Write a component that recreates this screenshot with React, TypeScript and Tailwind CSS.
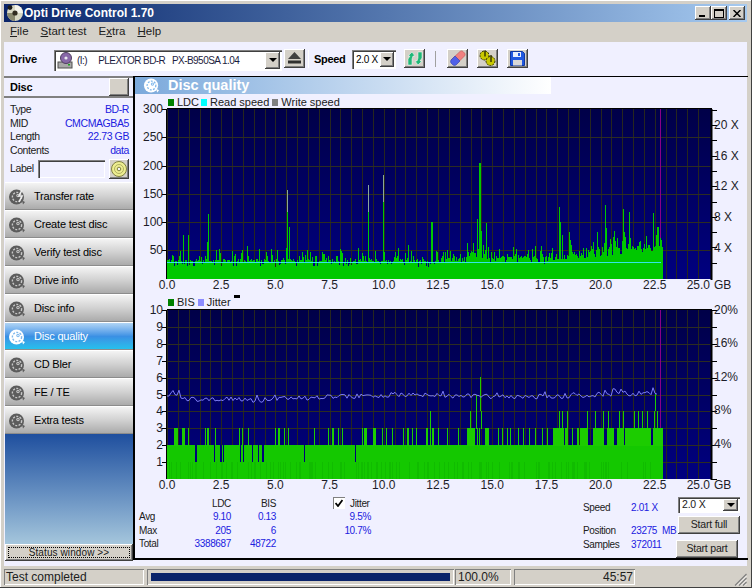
import React from "react";

function rng(seed: number) {
  let s = seed;
  return () => {
    s = (s + 0x6d2b79f5) | 0;
    let t = Math.imul(s ^ (s >>> 15), 1 | s);
    t = (t + Math.imul(t ^ (t >>> 7), 61 | t)) ^ t;
    return ((t ^ (t >>> 14)) >>> 0) / 4294967296;
  };
}

const X0 = 167;
const XS = 21.68;
const XEND = 661;
const vGrid = Array.from({ length: 50 }, (_, i) => X0 + 10.84 * i);
const xLabels = ["0.0", "2.5", "5.0", "7.5", "10.0", "12.5", "15.0", "17.5", "20.0", "22.5"];

const ldcPeaks: [number, number][] = [
  [183, 235], [188, 235], [207, 242], [208, 214], [219, 249], [247, 246], [259, 249], [286, 248], [287, 190], [289, 227],
  [307, 250], [340, 249], [358, 248], [368, 185], [383, 175], [398, 248], [408, 245], [431, 222], [432, 222], [437, 252],
  [467, 243], [473, 243], [477, 219], [479, 163], [480, 163], [481, 231], [483, 245], [486, 223], [559, 207], [560, 222],
  [562, 235], [569, 232], [570, 240], [597, 232], [605, 205], [606, 228], [614, 231], [617, 238], [623, 209], [624, 232],
  [629, 212], [630, 238], [653, 213], [657, 227], [658, 227], [660, 238],
];

function ldcPath() {
  const r = rng(11);
  let d = "";
  const peaks = new Map(ldcPeaks);
  for (let x = X0; x <= XEND + 1; x++) {
    const a = r();
    const b = r();
    let y = 262 - a * 3;
    if (b < 0.18) y = 263 + a * 4;
    else if (b > 0.66) y = 261 - a * 12;
    if (x > 440) y -= 3;
    if (x > 548) y -= ((x - 548) / 112) * 10 + a * 3;
    const p = peaks.get(x);
    if (p) y = p;
    d += `M${x + 0.5} ${y.toFixed(0)}V279`;
  }
  return d;
}

const threes = [
  [174, 176], [177, 177], [182, 184], [188, 188], [205, 205], [207, 208], [215, 215], [239, 239], [242, 242], [248, 248],
  [275, 275], [278, 279], [284, 284], [288, 288], [314, 314], [328, 328], [332, 333], [338, 338], [342, 342], [362, 362],
  [364, 366], [373, 375], [382, 382], [386, 386], [392, 392], [403, 403], [407, 408], [412, 412], [416, 416], [426, 427],
  [430, 430], [432, 433], [438, 438], [447, 447], [458, 458], [467, 474], [477, 477], [479, 479], [485, 488], [498, 498],
  [502, 502], [507, 507], [510, 510], [518, 518], [523, 523], [529, 529], [535, 535], [542, 542], [547, 547], [553, 563],
  [565, 567], [572, 572], [577, 578], [580, 587], [593, 603], [607, 613], [617, 623], [625, 632], [633, 650], [653, 662],
];
const fours = [430, 470, 476, 481, 559, 562, 567, 587, 595, 603, 608, 619, 623, 634, 638, 642, 647, 654, 657];
const gaps = [195, 196, 214, 220, 221, 223, 240, 243, 252, 258, 262, 263, 304, 355];

function bisPaths() {
  let three = "";
  for (const [a, b] of threes) for (let x = a; x <= b; x++) three += `M${x + 0.5} 446V428`;
  let four = "";
  for (const x of fours) four += `M${x + 0.5} 429V411`;
  const r = rng(5);
  let band = "";
  for (let x = X0; x <= XEND + 1; x += 1) if (r() < 0.25) band += `M${x + 0.5} 462V479`;
  let gap = "";
  for (const x of gaps) gap += `M${x + 0.5} 445V462`;
  return { three, four, band, gap };
}

function jitterPoints() {
  const r = rng(23);
  const anchors: [number, number][] = [
    [167, 398], [170, 394], [175, 393], [182, 397], [190, 399], [260, 400], [330, 397], [400, 394.5], [440, 396], [530, 397], [600, 394.5], [658, 392.5],
  ];
  const pts: string[] = [];
  let i = 0;
  for (let x = X0; x <= 658; x += 2) {
    while (i < anchors.length - 2 && x > anchors[i + 1][0]) i++;
    const [xa, ya] = anchors[i];
    const [xb, yb] = anchors[i + 1];
    const base = ya + ((yb - ya) * (x - xa)) / (xb - xa);
    const y = base + (r() - 0.5) * 5 - (r() > 0.93 ? 3 : 0);
    pts.push(`${x},${y.toFixed(1)}`);
  }
  return pts.join(" ");
}

const bis = bisPaths();

function PlotBg({ id, y0, y1, hs }: { id: string; y0: number; y1: number; hs: number[] }) {
  return (
    <>
      <defs>
        <linearGradient id={id} x1="0" y1="0" x2="0" y2="1">
          <stop offset="0" stopColor="#000048" />
          <stop offset="1" stopColor="#000080" />
        </linearGradient>
      </defs>
      <rect x={X0} y={y0} width={544} height={y1 - y0} fill={`url(#${id})`} />
      {vGrid.map((x) => (
        <line key={x} x1={Math.round(x) + 0.5} x2={Math.round(x) + 0.5} y1={y0} y2={y1} stroke="#26261f" />
      ))}
      {hs.map((y) => (
        <line key={y} x1={X0} x2={711} y1={Math.round(y) + 0.5} y2={Math.round(y) + 0.5} stroke="#2c2c22" />
      ))}
    </>
  );
}

function PlotFrame({ y0, y1, left, right, labelY }: { y0: number; y1: number; left: number[]; right: number[]; labelY: number }) {
  return (
    <>
      <line x1={X0 - 0.5} x2={X0 - 0.5} y1={y0} y2={y1} stroke="#000" />
      <line x1={X0} x2={712} y1={y0 - 0.5} y2={y0 - 0.5} stroke="#000" strokeWidth={1} />
      <line x1={711.5} x2={711.5} y1={y0} y2={y1 + 1} stroke="#000" strokeWidth={2} />
      {left.map((y) => (
        <line key={y} x1={X0 - 5} x2={X0} y1={Math.round(y) + 0.5} y2={Math.round(y) + 0.5} stroke="#000" />
      ))}
      {right.map((y) => (
        <line key={y} x1={711} x2={717} y1={Math.round(y) + 0.5} y2={Math.round(y) + 0.5} stroke="#000" />
      ))}
      {xLabels.map((t, i) => (
        <text key={t} x={X0 + i * 2.5 * XS} y={labelY} textAnchor="middle" fontSize={12} fill="#1c1c28">{t}</text>
      ))}
      <text x={710} y={labelY} textAnchor="end" fontSize={12} fill="#1c1c28">25.0</text>
      <text x={714} y={labelY} fontSize={12} fill="#1c1c28">GB</text>
    </>
  );
}

function Chart1() {
  const hs = [50, 100, 150, 200, 250].map((v) => 278.5 - v * 0.565);
  const rightTicks = Array.from({ length: 11 }, (_, i) => 125 + i * 15.3 - 15.3);
  return (
    <svg width={613} height={186} viewBox="135 108 613 186" className="block shrink-0 overflow-visible">
      <PlotBg id="g1" y0={109} y1={279} hs={hs} />
      <line x1={660.5} x2={660.5} y1={109} y2={279} stroke="#880088" />
      <path d={ldcPath()} stroke="#00c800" strokeWidth={1} fill="none" />
      <line x1={287.5} x2={287.5} y1={190} y2={212} stroke="#8aa898" />
      <line x1={368.5} x2={368.5} y1={185} y2={212} stroke="#8aa898" />
      <line x1={383.5} x2={383.5} y1={175} y2={202} stroke="#8aa898" />
      <line x1={167} x2={661} y1={262.5} y2={262.5} stroke="#30e8e8" />
      <PlotFrame y0={109} y1={279} left={[109, ...hs]} right={rightTicks} labelY={289} />
      {[300, 250, 200, 150, 100, 50].map((v) => (
        <text key={v} x={163} y={278.5 - v * 0.565 + 4} textAnchor="end" fontSize={12} fill="#1c1c28">{v}</text>
      ))}
      {[["20 X", 125], ["16 X", 156], ["12 X", 186], ["8 X", 216.5], ["4 X", 248]].map(([t, y]) => (
        <text key={t as string} x={714} y={(y as number) + 4} fontSize={12} fill="#1c1c28">{t}</text>
      ))}
    </svg>
  );
}

function Chart2() {
  const hs = [1, 2, 3, 4, 5, 6, 7, 8, 9].map((v) => 479 - v * 16.9);
  const rightTicks = Array.from({ length: 11 }, (_, i) => 310 + i * 16.9);
  return (
    <svg width={613} height={184} viewBox="135 308 613 184" className="block shrink-0 overflow-visible">
      <PlotBg id="g2" y0={310} y1={479} hs={hs} />
      <line x1={660.5} x2={660.5} y1={310} y2={429} stroke="#880088" />
      <rect x={X0} y={445} width={XEND - X0 + 2} height={34} fill="#14c800" />
      <path d={bis.band} stroke="#10bc00" fill="none" />
      <path d={bis.gap} stroke="#00007a" fill="none" />
      <path d={bis.three} stroke="#1ccc00" fill="none" />
      <path d={bis.four} stroke="#1ccc00" fill="none" />
      <line x1={480.5} x2={480.5} y1={377} y2={411} stroke="#1ccc00" />
      <line x1={476.5} x2={476.5} y1={395} y2={411} stroke="#1ccc00" />
      <line x1={655.5} x2={655.5} y1={394} y2={411} stroke="#1ccc00" />
      <polyline points={jitterPoints()} fill="none" stroke="#7c7cf4" strokeWidth={1} />
      <PlotFrame y0={310} y1={479} left={[310, ...hs]} right={rightTicks} labelY={489} />
      {[10, 9, 8, 7, 6, 5, 4, 3, 2, 1].map((v) => (
        <text key={v} x={163} y={479 - v * 16.9 + 4} textAnchor="end" fontSize={12} fill="#1c1c28">{v}</text>
      ))}
      {[["20%", 310], ["16%", 343], ["12%", 376.5], ["8%", 410], ["4%", 444]].map(([t, y]) => (
        <text key={t as string} x={714} y={(y as number) + 4} fontSize={12} fill="#1c1c28">{t}</text>
      ))}
    </svg>
  );
}

function DiscIcon({ light, size = 18, bolt }: { light?: boolean; size?: number; bolt?: boolean }) {
  const main = light ? "#ffffff" : "#5c5c5c";
  const inner = light ? "#7fb8ec" : "#c8c8c8";
  return (
    <svg width={size} height={size} viewBox="0 0 18 18" className="shrink-0">
      <circle cx="8.5" cy="9" r="7.5" fill={main} />
      <circle cx="9" cy="9" r="4.6" fill="none" stroke={inner} strokeWidth="1.4" strokeDasharray="2 1.4" />
      <circle cx="10" cy="7.5" r="1.7" fill={inner} />
      <circle cx="10" cy="7.5" r="0.7" fill={main} />
      <path d="M14 12.5l3 1.5-2 2.5z" fill={main} />
      {bolt && <path d="M14 2l-3 6h3l-3 6" fill="none" stroke="#ececec" strokeWidth="1.6" />}
    </svg>
  );
}

const raised = "shadow-[inset_-1px_-1px_0_#404040,inset_1px_1px_0_#ffffff,inset_-2px_-2px_0_#808080]";
const sunken = "shadow-[inset_1px_1px_0_#808080,inset_2px_2px_0_#404040,inset_-1px_-1px_0_#ffffff]";
const thinSunken = "shadow-[inset_1px_1px_0_#808080,inset_-1px_-1px_0_#ffffff]";

function ToolBtn({ children, className = "" }: { children: React.ReactNode; className?: string }) {
  return (
    <div className={`w-[21px] h-[19px] bg-[#d4d0c8] flex items-center justify-center shrink-0 ${raised} ${className}`}>
      {children}
    </div>
  );
}

function ComboArrow({ w = 15 }: { w?: number }) {
  return (
    <div className={`h-full bg-[#d4d0c8] flex items-center justify-center shrink-0 ${raised}`} style={{ width: w }}>
      <div className="w-0 h-0 border-l-[4px] border-r-[4px] border-t-[4px] border-l-transparent border-r-transparent border-t-black" />
    </div>
  );
}

function NavBtn({ label, active, bolt }: { label: string; active?: boolean; bolt?: boolean }) {
  return (
    <div
      className={`h-[28px] flex items-center pl-[3px] gap-[8px] text-[11px] tracking-[-0.2px] border-t border-white shadow-[inset_0_-1px_0_#8c8c8c] ${
        active
          ? "bg-gradient-to-b from-[#b0d4f4] via-[#3a90e4] to-[#22c4ec] text-white"
          : "bg-gradient-to-b from-[#f4f4f4] via-[#d0d0d0] to-[#a8a8a8] text-black"
      }`}
    >
      <DiscIcon light={active} bolt={bolt} />
      <span>{label}</span>
    </div>
  );
}

function InfoRow({ k, v }: { k: string; v: string }) {
  return (
    <div className="flex justify-between h-[13.7px] items-center">
      <span className="text-[#202020]">{k}</span>
      <span className="text-[#2020e0]">{v}</span>
    </div>
  );
}

const cell = "h-[13.5px] flex items-center";

export default function App() {
  return (
    <div className="w-[752px] h-[588px] bg-[#d4d0c8] flex flex-col pt-[4px] px-[4px] pb-[2px] overflow-hidden border-r border-b border-[#404040] shadow-[inset_1px_1px_0_#ffffff] text-[11px] text-black [font-family:'Liberation_Sans',Arial,sans-serif]">
      {/* Title */}
      <div className="h-[18px] shrink-0 bg-gradient-to-r from-[#0a246a] to-[#a6caf0] flex items-center pl-[2px] pr-[2px]">
        <svg width="18" height="18" viewBox="0 0 18 18" className="shrink-0">
          <circle cx="9" cy="9" r="8" fill="#d8d8c4" />
          <path d="M9 1a8 8 0 0 1 8 8H9z" fill="#f4f4ec" />
          <path d="M1 9a8 8 0 0 0 8 8V9z" fill="#8a8a70" />
          <circle cx="9" cy="9" r="2.6" fill="#302c20" />
          <circle cx="4" cy="3.6" r="2.4" fill="#1c1c18" />
        </svg>
        <span className="text-white font-bold text-[12px]">Opti Drive Control 1.70</span>
        <div className="ml-auto flex items-center">
          <div className={`w-[16px] h-[14px] bg-[#d4d0c8] relative ${raised}`}>
            <div className="absolute left-[4px] bottom-[3px] w-[6px] h-[2px] bg-black" />
          </div>
          <div className={`w-[16px] h-[14px] bg-[#d4d0c8] flex items-center justify-center ${raised}`}>
            <div className="w-[10px] h-[9px] border border-black border-t-2" />
          </div>
          <div className={`ml-[2px] w-[16px] h-[14px] bg-[#d4d0c8] flex items-center justify-center ${raised}`}>
            <svg width="8" height="7" viewBox="0 0 8 7"><path d="M0.5 0L7.5 7M7.5 0L0.5 7" stroke="#000" strokeWidth="1.5" /></svg>
          </div>
        </div>
      </div>
      {/* Menu */}
      <div className="h-[20px] shrink-0 flex items-center text-[11.5px] text-[#202020] pl-[6px] gap-[12px]">
        <span><u>F</u>ile</span>
        <span><u>S</u>tart test</span>
        <span>E<u>x</u>tra</span>
        <span><u>H</u>elp</span>
      </div>
      {/* Toolbar */}
      <div className="h-[34px] shrink-0 bg-[#f0f0ff] flex items-center">
        <span className="ml-[6px] w-[44px] font-bold tracking-[-0.1px]">Drive</span>
        <div className={`w-[228px] h-[21px] bg-white flex items-center pl-[3px] pr-[2px] py-[2px] mt-[2px] ${sunken}`}>
          <svg width="16" height="17" viewBox="0 0 16 17" className="shrink-0">
            <rect x="1" y="10" width="14" height="6" fill="#a8a8a8" stroke="#505050" />
            <circle cx="9" cy="6" r="5.5" fill="#8868a8" stroke="#504060" />
            <circle cx="9" cy="6" r="1.6" fill="#e8e8f0" />
            <rect x="11" y="12" width="2" height="1.5" fill="#20a020" />
          </svg>
          <span className="ml-[4px] text-[10px] tracking-[-0.55px] text-[#1c1c40] whitespace-pre">(I:)     PLEXTOR BD-R   PX-B950SA 1.04</span>
          <div className="ml-auto h-full"><ComboArrow /></div>
        </div>
        <ToolBtn className="ml-[2px] -mt-[2px]">
          <svg width="13" height="12" viewBox="0 0 13 12">
            <path d="M6.5 0L13 7H0z" fill="#404040" />
            <rect x="0" y="8.5" width="13" height="3" fill="#303030" />
          </svg>
        </ToolBtn>
        <div className="ml-[3px] w-[1px] h-[18px] bg-[#a0a0a0] border-r border-white" />
        <span className="ml-[5px] w-[38px] font-bold tracking-[-0.3px]">Speed</span>
        <div className={`w-[44px] h-[19px] bg-white flex items-center pl-[4px] pr-[2px] py-[2px] ${sunken}`}>
          <span className="text-[10px] tracking-[-0.3px] whitespace-nowrap">2.0 X</span>
          <div className="ml-auto h-full"><ComboArrow w={14} /></div>
        </div>
        <ToolBtn className="ml-[8px] -mt-[2px]">
          <svg width="16" height="15" viewBox="0 0 16 15">
            <path d="M1 14V8L3 5 1 5l4-4 3 4H6L5 8v6z" fill="#20b878" stroke="#fff" strokeWidth=".5" />
            <path d="M15 1v6l-2 3h2l-4 4-3-4h2l1-3V1z" fill="#20b878" stroke="#fff" strokeWidth=".5" />
          </svg>
        </ToolBtn>
        <div className="ml-[10px] w-[1px] h-[16px] bg-[#a0a0a0]" />
        <ToolBtn className="ml-[11px] -mt-[2px]">
          <svg width="16" height="16" viewBox="0 0 16 16">
            <path d="M1 10L10 1.5c1-.8 2-.8 3 0l1.5 1.5c.8 1 .8 2 0 3L6 14.5z" fill="#f08080" stroke="#c05050" strokeWidth=".6" />
            <path d="M1 10l4-4 5 5-4 4c-1 .6-2 .6-3 0L1 13c-.6-1-.6-2 0-3z" fill="#5060e8" stroke="#3040b0" strokeWidth=".6" />
          </svg>
        </ToolBtn>
        <ToolBtn className="ml-[9px] -mt-[2px]">
          <svg width="17" height="16" viewBox="0 0 17 16">
            <circle cx="5.5" cy="5.5" r="4.5" fill="#c8c800" stroke="#303000" strokeDasharray="2 1" />
            <circle cx="11.5" cy="11" r="4.5" fill="#c8c800" stroke="#303000" strokeDasharray="2 1" />
            <path d="M6 0.5v6M12 5v7" stroke="#303000" strokeWidth="1.4" />
          </svg>
        </ToolBtn>
        <ToolBtn className="ml-[9px] -mt-[2px]">
          <svg width="15" height="15" viewBox="0 0 15 15">
            <path d="M0.5 0.5h12l2 2v12h-14z" fill="#2058e0" stroke="#1038a0" />
            <rect x="3" y="1" width="8" height="5" fill="#e8f0ff" />
            <rect x="8" y="2" width="2" height="3" fill="#2058e0" />
            <rect x="3" y="9" width="9" height="5.5" fill="#d8d8d8" />
          </svg>
        </ToolBtn>
      </div>
      {/* Content */}
      <div className="h-[490px] shrink-0 bg-[#f0f0ff] flex items-start">
        {/* Sidebar */}
        <div className="w-[129px] h-[485px] shrink-0 flex flex-col">
          <div className="h-[22px] shrink-0 flex items-center border-t-2 border-b-2 border-[#808080] pl-[6px] pr-[4px] font-bold tracking-[-0.2px] justify-between">
            <span>Disc</span>
            <div className={`w-[20px] h-[18px] bg-[#d4d0c8] ${raised}`} />
          </div>
          <div className="h-[84px] shrink-0 pl-[6px] pr-[4px] pt-[5px] flex flex-col text-[10.5px] tracking-[-0.4px]">
            <InfoRow k="Type" v="BD-R" />
            <InfoRow k="MID" v="CMCMAGBA5" />
            <InfoRow k="Length" v="22.73 GB" />
            <InfoRow k="Contents" v="data" />
            <div className="flex items-center mt-[1px]">
              <span className="w-[28px] text-[#202020]">Label</span>
              <div className={`w-[67px] h-[18px] bg-[#f0f0ff] ${sunken}`} />
              <div className={`ml-[4px] w-[20px] h-[20px] bg-[#d4d0c8] flex items-center justify-center ${raised}`}>
                <svg width="16" height="16" viewBox="0 0 16 16">
                  <circle cx="8" cy="8" r="7.5" fill="#eeee90" stroke="#808040" />
                  <circle cx="8" cy="8" r="4.5" fill="none" stroke="#b0b060" />
                  <circle cx="8" cy="8" r="1.8" fill="#f4f4f4" stroke="#808040" />
                </svg>
              </div>
            </div>
          </div>
          <div className="shrink-0 flex flex-col pl-[1px]">
            <NavBtn label="Transfer rate" bolt />
            <NavBtn label="Create test disc" />
            <NavBtn label="Verify test disc" />
            <NavBtn label="Drive info" />
            <NavBtn label="Disc info" />
            <NavBtn label="Disc quality" active />
            <NavBtn label="CD Bler" />
            <NavBtn label="FE / TE" />
            <NavBtn label="Extra tests" />
          </div>
          <div className="flex-1 ml-[1px] bg-gradient-to-b from-[#1f4f9e] to-[#a5c6dc]" />
          <div className={`h-[17px] shrink-0 ml-[1px] bg-[#d4d0c8] p-[3px] ${raised}`}>
            <div className="h-full border border-dotted border-black flex items-center justify-center text-[10px] tracking-[0.1px] text-[#202020]">
              Status window &gt;&gt;
            </div>
          </div>
        </div>
        {/* Main */}
        <div className="w-[615px] h-[484px] shrink-0 border-l-2 border-t border-b-2 border-black flex flex-col">
          <div className="h-[17px] shrink-0 w-[416px] bg-gradient-to-r from-[#7ba9db] to-[#ffffff] flex items-center pl-[8px]">
            <DiscIcon light size={17} />
            <span className="ml-[8px] text-white font-bold text-[14.5px]">Disc quality</span>
          </div>
          <div className="h-[14px] shrink-0 flex items-center pl-[33px] pt-[2px] text-[11px] text-[#202020]">
            <div className="w-[6px] h-[7px] bg-[#008000]" />
            <span className="ml-[3px]">LDC</span>
            <div className="ml-[2px] w-[6px] h-[7px] bg-[#00ffff]" />
            <span className="ml-[3px]">Read speed</span>
            <div className="ml-[3px] w-[6px] h-[7px] bg-[#808080]" />
            <span className="ml-[3px]">Write speed</span>
          </div>
          <Chart1 />
          <div className="h-[14px] shrink-0 flex items-center pl-[33px] pt-[2px] text-[11px] text-[#202020]">
            <div className="w-[6px] h-[7px] bg-[#008000]" />
            <span className="ml-[3px]">BIS</span>
            <div className="ml-[3px] w-[6px] h-[7px] bg-[#8c8cff]" />
            <span className="ml-[3px]">Jitter</span>
            <div className="ml-[3px] w-[6px] h-[3px] bg-black self-start -mt-[1px]" />
          </div>
          <Chart2 />
          {/* Stats */}
          <div className="h-[66px] shrink-0 flex text-[10px] tracking-[-0.35px] text-[#202020]">
            <div className="ml-[4px] pt-[4.5px] grid grid-cols-[46px_46px_45px] auto-rows-[13.5px] w-[137px] content-start">
              <span className={cell} />
              <span className={`${cell} justify-end`}>LDC</span>
              <span className={`${cell} justify-end`}>BIS</span>
              <span className={cell}>Avg</span>
              <span className={`${cell} justify-end text-[#2020e0]`}>9.10</span>
              <span className={`${cell} justify-end text-[#2020e0]`}>0.13</span>
              <span className={cell}>Max</span>
              <span className={`${cell} justify-end text-[#2020e0]`}>205</span>
              <span className={`${cell} justify-end text-[#2020e0]`}>6</span>
              <span className={cell}>Total</span>
              <span className={`${cell} justify-end text-[#2020e0]`}>3388687</span>
              <span className={`${cell} justify-end text-[#2020e0]`}>48722</span>
            </div>
            <div className="ml-[57px] w-[38px] pt-[4.5px] flex flex-col">
              <div className="h-[13.5px] flex items-center">
                <div className={`w-[12px] h-[12px] bg-white flex items-center justify-center shrink-0 ${thinSunken}`}>
                  <svg width="8" height="8" viewBox="0 0 8 8"><path d="M0.5 4l2.5 3L7.5 1" fill="none" stroke="#000" strokeWidth="1.8" /></svg>
                </div>
                <span className="ml-[5px]">Jitter</span>
              </div>
              <span className={`${cell} justify-end text-[#2020e0]`}>9.5%</span>
              <span className={`${cell} justify-end text-[#2020e0]`}>10.7%</span>
            </div>
            <div className="ml-[212px] w-[93px] pt-[8px] grid grid-cols-[48px_45px] grid-rows-[14px_10px_13.5px_13.5px] content-start">
              <span className="flex items-center">Speed</span>
              <span className="flex items-center text-[#2020e0]">2.01 X</span>
              <span className="col-span-2" />
              <span className="flex items-center">Position</span>
              <span className="flex items-center text-[#2020e0] whitespace-pre">23275  MB</span>
              <span className="flex items-center">Samples</span>
              <span className="flex items-center text-[#2020e0]">372011</span>
            </div>
            <div className="flex flex-col w-[64px] text-[10.5px] tracking-[-0.2px]">
              <div className={`ml-[2px] mt-[5px] h-[16px] w-[62px] bg-white flex items-center pl-[4px] pr-[2px] py-[2px] ${sunken}`}>
                <span>2.0 X</span>
                <div className="ml-auto h-full"><ComboArrow w={15} /></div>
              </div>
              <div className={`ml-[2px] mt-[3px] h-[18px] w-[62px] bg-[#d4d0c8] flex items-center justify-center ${raised}`}>Start full</div>
              <div className={`mt-[6px] h-[18px] w-[62px] bg-[#d4d0c8] flex items-center justify-center ${raised}`}>Start part</div>
            </div>
          </div>
        </div>
      </div>
      {/* Status bar */}
      <div className="h-[20px] shrink-0 flex items-center text-[12px] text-[#202020] pt-[2px]">
        <div className={`w-[140px] h-[16px] flex items-center pl-[2px] ${thinSunken}`}>Test completed</div>
        <div className={`ml-[3px] w-[307px] h-[16px] p-[4px] flex ${thinSunken}`}>
          <div className="flex-1 bg-[#0a246a]" />
        </div>
        <div className={`ml-[1px] w-[56px] h-[16px] flex items-center pl-[3px] ${thinSunken}`}>100.0%</div>
        <div className={`ml-[3px] w-[121px] h-[16px] flex items-center justify-end pr-[2px] ${thinSunken}`}>45:57</div>
        <svg width="13" height="13" viewBox="0 0 13 13" className="ml-auto self-end">
          <path d="M12.5 1L1 12.5M12.5 5L5 12.5M12.5 9L9 12.5" stroke="#808080" strokeWidth="1.2" />
          <path d="M12.5 3L3 12.5M12.5 7L7 12.5M12.5 11L11 12.5" stroke="#ffffff" strokeWidth="0.8" />
        </svg>
      </div>
    </div>
  );
}
